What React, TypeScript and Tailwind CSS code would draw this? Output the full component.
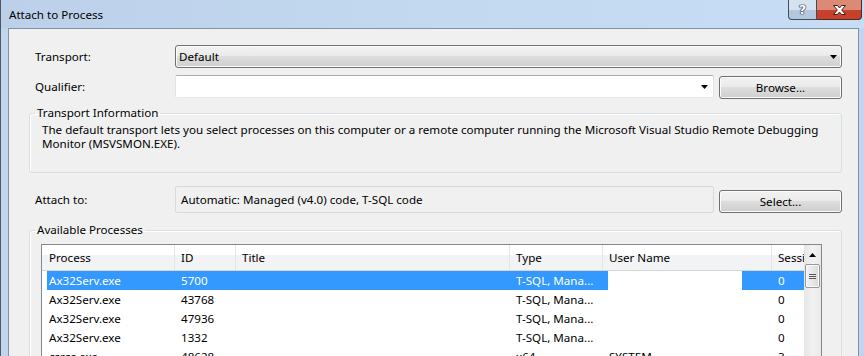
import React from "react";

const cols = [133, 61, 274, 93, 169, 32];
const headers = ["Process", "ID", "Title", "Type", "User Name", "Sessi"];
const rows = [
  ["Ax32Serv.exe", "5700", "", "T-SQL, Mana...", "", "0"],
  ["Ax32Serv.exe", "43768", "", "T-SQL, Mana...", "", "0"],
  ["Ax32Serv.exe", "47936", "", "T-SQL, Mana...", "", "0"],
  ["Ax32Serv.exe", "1332", "", "T-SQL, Mana...", "", "0"],
  ["csrss.exe", "48628", "", "x64", "SYSTEM", "3"],
];

function Arrow() {
  return (
    <svg width="7" height="4" viewBox="0 0 7 4" className="block">
      <path d="M0 0H7L3.5 4Z" fill="#000" />
    </svg>
  );
}

function WinButton({ label, className = "" }: { label: string; className?: string }) {
  return (
    <div
      className={
        "h-[23px] flex items-center justify-center rounded-[3px] border border-[#707070] bg-[linear-gradient(180deg,#f2f2f2_0%,#ebebeb_45%,#dddddd_50%,#cfcfcf_100%)] shadow-[inset_0_0_0_1px_#fcfcfc] text-black " +
        className
      }
    >
      {label}
    </div>
  );
}

export default function App() {
  return (
    <div className="w-[864px] h-[356px] overflow-hidden border-l border-[#4d5866] bg-[#c1d6ee] font-['Noto_Sans',sans-serif] text-[11.6px] leading-[14px] text-black">
      {/* Title bar */}
      <div className="h-[28px] flex items-start justify-between bg-linear-to-r from-[#bcd1e9] via-[#c3d9f0] to-[#c6ddf5]">
        <div className="pl-[8px] pt-[7px] leading-[16px]">Attach to Process</div>
        <div className="flex pr-[2px]">
          <div className="w-[29px] h-[20px] border border-t-0 border-[#3e4d61] rounded-bl-[4px] bg-[#b4c7dc] shadow-[inset_0_10px_0_#d6e2ef] flex items-center justify-center">
            <span className="font-['DejaVu_Sans',sans-serif] font-bold text-[13px] leading-[13px] text-white [text-shadow:0_0_1px_#1f2e42,0_0_1px_#1f2e42,0_0_1px_#1f2e42,0_0_1px_#1f2e42]">?</span>
          </div>
          <div className="w-[45px] h-[20px] border border-t-0 border-l-0 border-[#4b2a24] rounded-br-[4px] bg-[#c5412a] shadow-[inset_0_10px_0_#dc8a76] flex items-center justify-center">
            <svg width="17" height="12" viewBox="0 0 17 12">
              <path
                d="M2.5 1.5H6.5L8.5 4L10.5 1.5H14.5L10.7 6L14.5 10.5H10.5L8.5 8L6.5 10.5H2.5L6.3 6Z"
                fill="#fff"
                stroke="#4a2018"
                strokeWidth="1"
                strokeLinejoin="round"
              />
            </svg>
          </div>
        </div>
      </div>

      <div className="flex">
        <div className="w-[7px] shrink-0" />
        {/* client area */}
        <div className="w-[851px] h-[328px] shrink-0 border-l border-t border-r border-[#8393a6] bg-[#f0f0f0] pl-[20px] pr-[16px] pt-[16px]">
          {/* Transport */}
          <div className="flex items-center h-[23px]">
            <div className="w-[146px] pl-[6px]">Transport:</div>
            <div className="flex-1 h-[23px] flex items-center justify-between rounded-[3px] border border-[#707070] bg-[linear-gradient(180deg,#f2f2f2_0%,#ebebeb_45%,#dddddd_50%,#cfcfcf_100%)] shadow-[inset_0_0_0_1px_#fcfcfc] pl-[3px] pr-[4px]">
              <span>Default</span>
              <Arrow />
            </div>
          </div>

          {/* Qualifier */}
          <div className="flex items-start h-[24px] mt-[7px]">
            <div className="w-[146px] pl-[6px] h-[23px] flex items-center">Qualifier:</div>
            <div className="w-[539px] h-[23px] bg-white rounded-[2px] border border-[#e2e3ea] border-t-[#abadb3] border-b-[#e3e9ef] flex items-center justify-end pr-[5px]">
              <Arrow />
            </div>
            <WinButton label="Browse..." className="ml-[5px] mt-[1px] w-[123px]" />
          </div>

          {/* Transport Information */}
          <fieldset className="mt-[6px] border border-[#d5dfe5] rounded-[3px] shadow-[inset_1px_1px_0_#fff] pl-[12px] pr-[6px] pb-[21px]">
            <legend className="-ml-[7px] px-[2px] leading-[16px]">Transport Information</legend>
            <div className="pt-[2px] leading-[14px] whitespace-nowrap">
              The default transport lets you select processes on this computer or a remote computer running the Microsoft Visual Studio Remote Debugging
              <br />
              Monitor (MSVSMON.EXE).
            </div>
          </fieldset>

          {/* Attach to */}
          <div className="flex items-start h-[27px] mt-[13px]">
            <div className="w-[146px] pl-[6px] h-[27px] flex items-center">Attach to:</div>
            <div className="w-[539px] h-[27px] rounded-[2px] border border-[#d9d9d9] flex items-center pl-[5px]">
              Automatic: Managed (v4.0) code, T-SQL code
            </div>
            <WinButton label="Select..." className="ml-[5px] mt-[4px] w-[123px]" />
          </div>

          {/* Available Processes */}
          <fieldset className="mt-[9px] border border-[#d5dfe5] rounded-[3px] shadow-[inset_1px_1px_0_#fff] pl-[11px] pr-[19px] pb-[10px]">
            <legend className="-ml-[6px] px-[2px] leading-[16px]">Available Processes</legend>
            <div className="mt-[6px] w-[781px] border border-[#828790] bg-white flex">
              <div className="w-[762px]">
                {/* header */}
                <div className="flex h-[26px] border-b border-[#d5d5d5] bg-[linear-gradient(180deg,#ffffff_0%,#ffffff_40%,#f2f3f5_42%,#f2f3f5_100%)]">
                  {headers.map((h, i) => (
                    <div
                      key={h}
                      className={
                        "h-full flex items-center overflow-hidden whitespace-nowrap " +
                        (i === 0 ? "pl-[7px] w-[133px] " : "pl-[6px] ") +
                        (i === 1 ? "w-[61px] " : "") +
                        (i === 2 ? "w-[274px] " : "") +
                        (i === 3 ? "w-[93px] " : "") +
                        (i === 4 ? "w-[169px] " : "") +
                        (i === 5 ? "w-[32px] " : "") +
                        (i < headers.length - 1 ? "border-r border-[#e3e5e8]" : "")
                      }
                    >
                      {h}
                    </div>
                  ))}
                </div>
                {/* rows */}
                {rows.map((r, ri) => (
                  <div
                    key={ri}
                    className={
                      "flex h-[19px] " +
                      (ri === 0
                        ? "text-white bg-[linear-gradient(90deg,transparent_5px,#3399ff_5px,#3399ff_566px,transparent_566px,transparent_700px,#3399ff_700px)]"
                        : "")
                    }
                  >
                    {r.map((c, ci) => (
                      <div
                        key={ci}
                        style={{ width: cols[ci] }}
                        className={"h-full flex items-center overflow-hidden whitespace-nowrap " + (ci === 0 ? "pl-[7px]" : "pl-[6px]")}
                      >
                        {c}
                      </div>
                    ))}
                  </div>
                ))}
              </div>
              {/* scrollbar */}
              <div className="w-[17px] bg-[linear-gradient(90deg,#e6e6e6_0%,#f2f2f2_50%,#e9e9e9_100%)] flex flex-col items-center">
                <div className="h-[17px] w-full flex items-center justify-center pt-[2px]">
                  <svg width="7" height="4" viewBox="0 0 7 4" className="block">
                    <path d="M0 4H7L3.5 0Z" fill="#000" />
                  </svg>
                </div>
                <div className="mt-[2px] w-[15px] h-[24px] rounded-[2px] border border-[#979797] bg-[linear-gradient(90deg,#f3f3f3_0%,#e8e8e8_50%,#d8d8d8_100%)] shadow-[inset_0_0_0_1px_#fbfbfb] flex flex-col items-center justify-center gap-[1px]">
                  <div className="w-[7px] h-[1px] bg-[#5a5a5a]" />
                  <div className="w-[7px] h-[1px] bg-[#5a5a5a]" />
                  <div className="w-[7px] h-[1px] bg-[#5a5a5a]" />
                </div>
              </div>
            </div>
          </fieldset>
        </div>
      </div>
    </div>
  );
}
